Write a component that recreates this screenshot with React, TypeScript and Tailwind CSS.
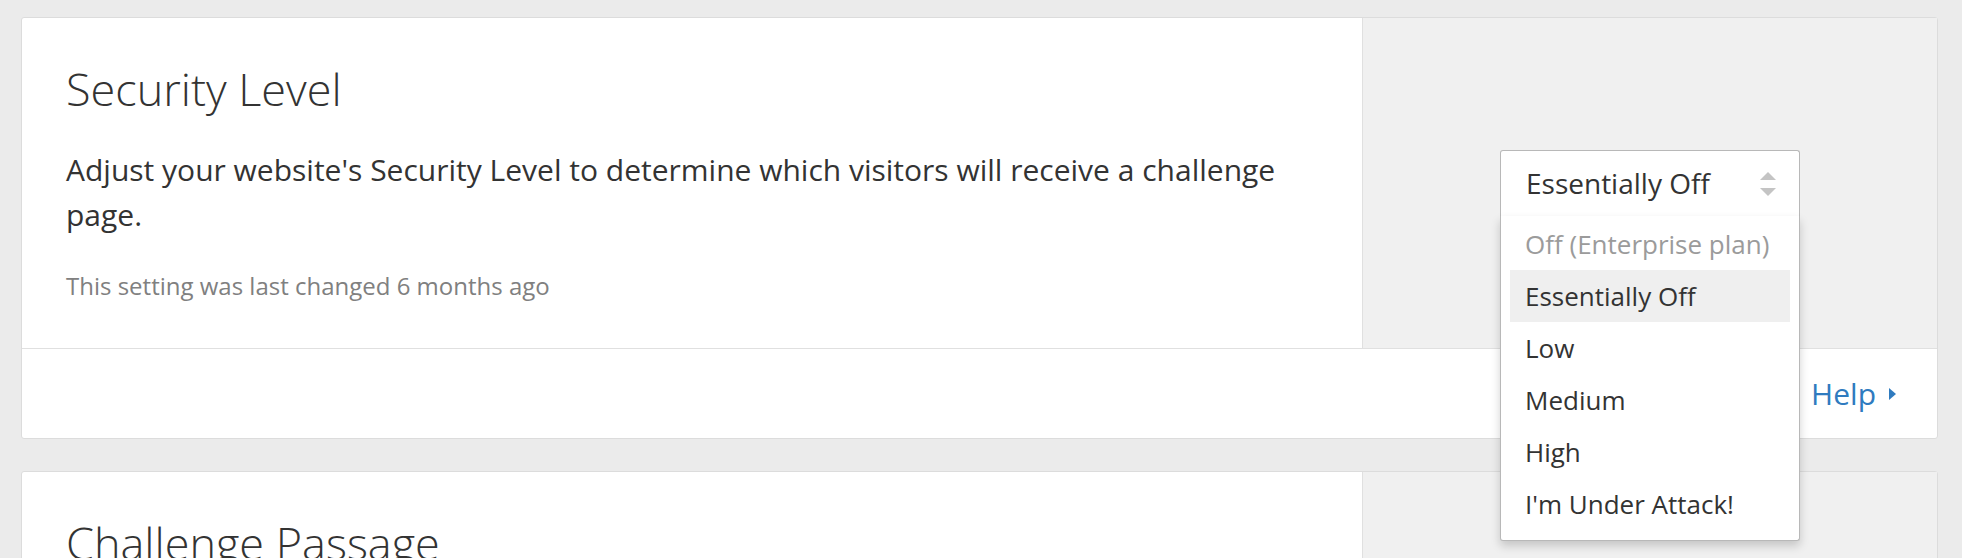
import React from 'react';

const options = [
  { label: 'Off (Enterprise plan)', disabled: true },
  { label: 'Essentially Off', active: true },
  { label: 'Low' },
  { label: 'Medium' },
  { label: 'High' },
  { label: "I'm Under Attack!" },
];

function SecuritySelect() {
  return (
    <div className="relative w-[300px]">
      {/* Select header */}
      <div className="flex h-[66px] items-center justify-between rounded-t-[3px] border border-b-0 border-[#b8b8b8] bg-white pl-[25px] pr-[23px] text-[28px] text-[#333]">
        <span className="-mt-[2px]">Essentially Off</span>
        <span className="flex flex-col items-center gap-[8px]">
          <span className="h-0 w-0 border-x-[8px] border-b-[8px] border-x-transparent border-b-[#c4c4c4]" />
          <span className="h-0 w-0 border-x-[8px] border-t-[8px] border-x-transparent border-t-[#c4c4c4]" />
        </span>
      </div>

      {/* Open options list */}
      <ul className="absolute left-0 right-0 top-full z-10 rounded-b-[3px] border border-t-0 border-[#b8b8b8] bg-white px-[9px] pt-[2px] pb-[10px] shadow-[0_5px_10px_rgba(0,0,0,0.18)]">
        {options.map((o) => (
          <li
            key={o.label}
            className={
              'flex h-[52px] items-center px-[15px] text-[26px] ' +
              (o.disabled ? 'text-[#9b9b9b] ' : 'text-[#333] ') +
              (o.active ? 'bg-[#efefef]' : '')
            }
          >
            {o.label}
          </li>
        ))}
      </ul>
    </div>
  );
}

export default function App() {
  return (
    <div className="min-h-screen bg-[#ebebeb] pt-[17px] pl-[21px] pr-[24px] font-['Open_Sans',sans-serif]">
      {/* Security Level card */}
      <section className="rounded-[3px] border border-[#dcdcdc] bg-white">
        <div className="flex">
          <div className="w-[1340px] px-[44px] py-[44px]">
            <h2 className="text-[45px] font-light leading-[54px] text-[#333]">Security Level</h2>
            <p className="mt-[31px] text-[30px] leading-[45px] text-[#333]">
              Adjust your website's Security Level to determine which visitors will receive a challenge page.
            </p>
            <p className="mt-[31px] text-[24px] leading-[36px] text-[#808080]">
              This setting was last changed 6 months ago
            </p>
          </div>
          <div className="flex flex-1 items-center justify-center border-l border-[#e0e0e0] bg-[#f0f0f0]">
            <SecuritySelect />
          </div>
        </div>
        <div className="flex h-[90px] items-center justify-end gap-[13px] border-t border-[#e0e0e0] pr-[41px]">
          <a className="text-[30px] text-[#2f7bbf]">Help</a>
          <span className="h-0 w-0 border-y-[6px] border-l-[7px] border-y-transparent border-l-[#2f7bbf]" />
        </div>
      </section>

      {/* Challenge Passage card */}
      <section className="mt-[32px] rounded-[3px] border border-[#dcdcdc] bg-white">
        <div className="flex">
          <div className="w-[1340px] px-[44px] py-[44px]">
            <h2 className="text-[45px] font-light leading-[54px] text-[#333]">Challenge Passage</h2>
            <p className="mt-[31px] text-[30px] leading-[45px] text-[#333]">
              Specify the length of time that a visitor, who has successfully completed a challenge, can access your website.
            </p>
          </div>
          <div className="flex-1 border-l border-[#e0e0e0] bg-[#f0f0f0]" />
        </div>
      </section>
    </div>
  );
}
